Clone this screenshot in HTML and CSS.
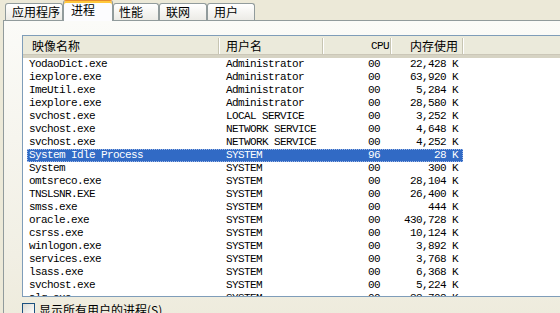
FILE: index.html
```html
<!DOCTYPE html>
<html lang="zh-CN">
<head>
    <meta charset="UTF-8">
    <title>Windows 任务管理器 - 进程</title>
    <link rel="stylesheet" href="styles.css">
</head>
<body>
    <div class="window">
        <div class="tabs">
            <div class="tab wide">应用程序</div>
            <div class="tab active">进程</div>
            <div class="tab narrow">性能</div>
            <div class="tab">联网</div>
            <div class="tab">用户</div>
        </div>
        <div class="page">
            <div class="list">
                <div class="list-head">
                    <div class="hcell">映像名称</div>
                    <div class="hcell">用户名</div>
                    <div class="hcell right mono">CPU</div>
                    <div class="hcell right mem">内存使用</div>
                    <div class="hcell filler"></div>
                </div>
                <div class="list-body">
                    <div class="row"><span>YodaoDict.exe</span><span>Administrator</span><span class="cpu">00</span><span class="mem">22,428 K</span></div>
                    <div class="row"><span>iexplore.exe</span><span>Administrator</span><span class="cpu">00</span><span class="mem">63,920 K</span></div>
                    <div class="row"><span>ImeUtil.exe</span><span>Administrator</span><span class="cpu">00</span><span class="mem">5,284 K</span></div>
                    <div class="row"><span>iexplore.exe</span><span>Administrator</span><span class="cpu">00</span><span class="mem">28,580 K</span></div>
                    <div class="row"><span>svchost.exe</span><span>LOCAL SERVICE</span><span class="cpu">00</span><span class="mem">3,252 K</span></div>
                    <div class="row"><span>svchost.exe</span><span>NETWORK SERVICE</span><span class="cpu">00</span><span class="mem">4,648 K</span></div>
                    <div class="row"><span>svchost.exe</span><span>NETWORK SERVICE</span><span class="cpu">00</span><span class="mem">4,252 K</span></div>
                    <div class="row selected"><span>System Idle Process</span><span>SYSTEM</span><span class="cpu">96</span><span class="mem">28 K</span></div>
                    <div class="row"><span>System</span><span>SYSTEM</span><span class="cpu">00</span><span class="mem">300 K</span></div>
                    <div class="row"><span>omtsreco.exe</span><span>SYSTEM</span><span class="cpu">00</span><span class="mem">28,104 K</span></div>
                    <div class="row"><span>TNSLSNR.EXE</span><span>SYSTEM</span><span class="cpu">00</span><span class="mem">26,400 K</span></div>
                    <div class="row"><span>smss.exe</span><span>SYSTEM</span><span class="cpu">00</span><span class="mem">444 K</span></div>
                    <div class="row"><span>oracle.exe</span><span>SYSTEM</span><span class="cpu">00</span><span class="mem">430,728 K</span></div>
                    <div class="row"><span>csrss.exe</span><span>SYSTEM</span><span class="cpu">00</span><span class="mem">10,124 K</span></div>
                    <div class="row"><span>winlogon.exe</span><span>SYSTEM</span><span class="cpu">00</span><span class="mem">3,892 K</span></div>
                    <div class="row"><span>services.exe</span><span>SYSTEM</span><span class="cpu">00</span><span class="mem">3,768 K</span></div>
                    <div class="row"><span>lsass.exe</span><span>SYSTEM</span><span class="cpu">00</span><span class="mem">6,368 K</span></div>
                    <div class="row"><span>svchost.exe</span><span>SYSTEM</span><span class="cpu">00</span><span class="mem">5,224 K</span></div>
                    <div class="row"><span>alg.exe</span><span>SYSTEM</span><span class="cpu">00</span><span class="mem">33,708 K</span></div>
                </div>
            </div>
            <label class="check"><span class="box"></span>显示所有用户的进程(S)</label>
        </div>
    </div>
</body>
</html>
```

FILE: styles.css
```css
body {
    margin: 0;
    padding: 0;
    width: 560px;
    height: 313px;
    overflow: hidden;
    background-color: #ece9d8;
    font-family: "Noto Sans CJK SC", "Liberation Sans", sans-serif;
    font-size: 12px;
    color: #000;
}
.window {
    width: 720px;
}
.tabs {
    display: flex;
    align-items: flex-end;
    height: 20px;
    padding-left: 5px;
    position: relative;
    z-index: 2;
}
.tab {
    box-sizing: border-box;
    width: 48px;
    height: 17px;
    padding-left: 6px;
    line-height: 16px;
    border: 1px solid #919b9c;
    border-bottom: none;
    border-radius: 3px 3px 0 0;
    background: linear-gradient(#ffffff, #ecebe6);
    white-space: nowrap;
}
.tab.wide {
    width: 58px;
}
.tab.narrow {
    width: 46px;
    padding-left: 5px;
}
.tab.active {
    width: 50px;
    height: 21px;
    margin-bottom: -1px;
    padding-left: 7px;
    line-height: 18px;
    border-top: 1px solid #e68b2c;
    box-shadow: inset 0 2px 0 #ffc83c;
    background: #fcfcfe;
}
.page {
    margin-left: 3px;
    border-top: 1px solid #919b9c;
    border-left: 1px solid #919b9c;
    padding: 14px 0 0 18px;
    height: 320px;
    background: linear-gradient(#fbfbf8, #f1efe4 70%, #ece9d8);
}
.list {
    width: 620px;
    height: 260px;
    border: 1px solid #7f9db9;
    background-color: #fff;
    overflow: hidden;
}
.list-head {
    display: grid;
    grid-template-columns: 196px 104px 68px 72px 1fr;
    height: 22px;
    box-sizing: border-box;
    background-color: #ebeadb;
    border-bottom: 3px solid #d6d3c3;
    box-shadow: inset 0 -1px 0 #cbc7b8;
}
.hcell {
    padding-left: 9px;
    border-right: 1px solid #c7c5b2;
    box-shadow: 1px 0 0 #fff;
    margin: 2px 0 1px;
    line-height: 16px;
}
.hcell:nth-child(2) {
    padding-left: 7px;
}
.hcell.right {
    text-align: right;
    padding-left: 0;
    padding-right: 1px;
}
.hcell.mem {
    padding-right: 4px;
}
.hcell.filler {
    border-right: none;
}
.mono,
.row {
    font-family: "Liberation Mono", "DejaVu Sans Mono", monospace;
    font-size: 11px;
    letter-spacing: -0.6px;
}
.row {
    display: grid;
    grid-template-columns: 192px 104px 68px 72px;
    width: 436px;
    height: 13px;
    line-height: 13px;
    margin-left: 4px;
    white-space: nowrap;
}
.row span:first-child {
    padding-left: 2px;
}
.row span:nth-child(2) {
    padding-left: 7px;
}
.row .cpu {
    text-align: right;
    padding-right: 11px;
}
.row .mem {
    text-align: right;
    padding-right: 5px;
}
.row.selected {
    background-color: #316ac5;
    color: #fff;
    outline: 1px dotted #9fb8e6;
    outline-offset: -1px;
}
.check {
    display: flex;
    align-items: center;
    gap: 4px;
    margin-top: 5px;
    height: 14px;
}
.box {
    box-sizing: border-box;
    width: 13px;
    height: 13px;
    border: 1px solid #1c5180;
    background: linear-gradient(135deg, #dcdad2, #ffffff);
}
```
